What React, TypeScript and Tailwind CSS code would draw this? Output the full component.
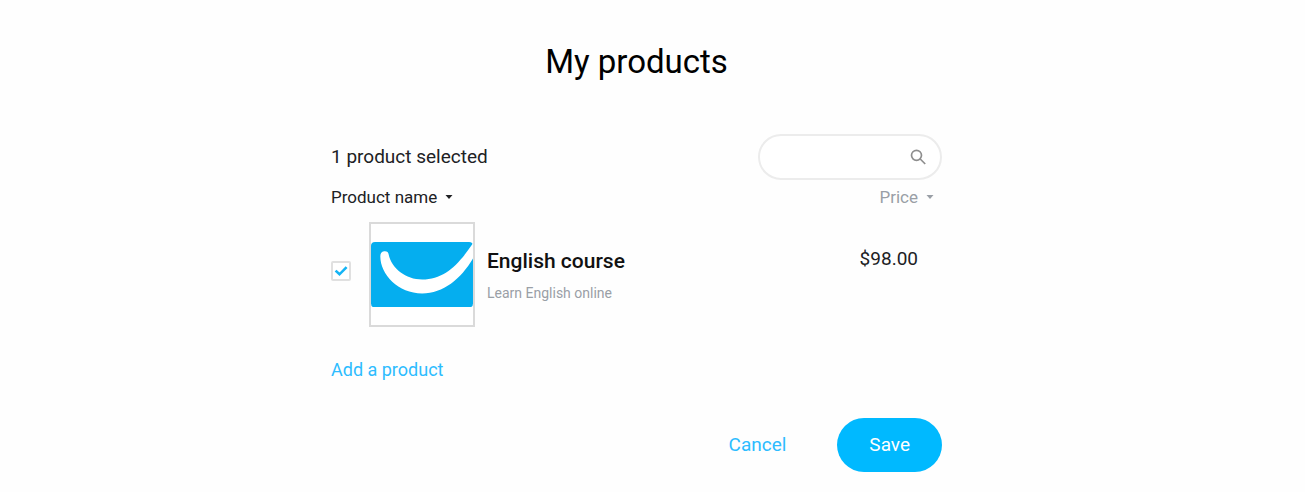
import { useState } from "react";

interface Product {
    id: number;
    name: string;
    description: string;
    price: string;
}

const products: Product[] = [
    { id: 1, name: "English course", description: "Learn English online", price: "$98.00" }
];

export default function App() {
    const [selected, setSelected] = useState<number[]>([1]);

    const toggle = (id: number) => {
        setSelected(selected.includes(id) ? selected.filter((s) => s !== id) : [...selected, id]);
    }

    return <main className="min-h-screen bg-[#fefefe] pt-10 pr-8 font-['Roboto',sans-serif] text-[#202124]">
        <div className="mx-auto w-full max-w-[611px]">
            <h1 className="text-center text-[33px] leading-11 text-black">My products</h1>
            <div className="mt-[50px] flex items-center justify-between">
                <div className="text-[19px]">{selected.length} product selected</div>
                <SearchBox />
            </div>
            <table className="mt-1 w-full text-left">
                <thead>
                    <tr>
                        <th colSpan={2} className="p-0 font-normal">
                            <SortButton label="Product name" />
                        </th>
                        <th className="p-0 pr-2 text-right font-normal text-[#9a9fa6]">
                            <SortButton label="Price" />
                        </th>
                    </tr>
                </thead>
                <tbody>
                    {products.map((product) => <ProductRow
                        key={product.id}
                        product={product}
                        checked={selected.includes(product.id)}
                        onToggle={() => toggle(product.id)}
                    />)}
                </tbody>
            </table>
            <a href="#add" className="mt-[29px] inline-block text-lg text-[#2dbcff]">Add a product</a>
            <div className="mt-[34px] flex items-center justify-end gap-[51px]">
                <button type="button" className="text-[19px] text-[#2dbcff]">Cancel</button>
                <button type="button" className="h-[54px] rounded-full bg-[#00b9ff] px-8 text-[19px] text-white">Save</button>
            </div>
        </div>
    </main>
}

function ProductRow({ product, checked, onToggle }: { product: Product, checked: boolean, onToggle: () => void }) {
    return <tr>
        <td className="w-[38px] p-0 pt-1">
            <label className="relative flex h-5 w-5">
                <input
                    type="checkbox"
                    aria-label={`Select ${product.name}`}
                    checked={checked}
                    onChange={onToggle}
                    className="peer h-5 w-5 appearance-none rounded-xs border-2 border-[#e0e0e0] bg-white"
                />
                <svg viewBox="0 0 20 20" className="pointer-events-none absolute inset-0 hidden peer-checked:block" fill="none" stroke="#14b4f5" strokeWidth="2.6">
                    <path d="M4.6 9.6 L8.5 13.3 L15.6 6.2" />
                </svg>
            </label>
        </td>
        <td className="p-0 pt-3">
            <div className="flex items-center">
                <div className="flex h-[105px] w-[106px] items-center border-2 border-[#dadada] bg-white">
                    <Smile />
                </div>
                <div className="ml-3">
                    <div className="text-[21px] leading-7 font-medium text-[#111111]">{product.name}</div>
                    <div className="mt-2 text-sm text-[#9a9fa6]">{product.description}</div>
                </div>
            </div>
        </td>
        <td className="p-0 pr-6 pt-[35px] text-right align-top text-[19px]">{product.price}</td>
    </tr>
}

function SearchBox() {
    return <label className="flex h-[46px] w-[184px] items-center rounded-full border-2 border-[#ececec] bg-white pr-3.5 pl-5">
        <input type="text" aria-label="Search products" className="min-w-0 flex-1 text-base outline-none" />
        <svg viewBox="0 0 16 16" className="h-4 w-4" fill="none" stroke="#8e8e8e" strokeWidth="1.7">
            <circle cx="6.5" cy="6.3" r="5" />
            <path d="M10.2 10 L15.2 15" />
        </svg>
    </label>
}

function SortButton({ label }: { label: string }) {
    return <button type="button" className="inline-flex items-center gap-2 text-[17px] leading-[26px]">
        {label}
        <svg viewBox="0 0 8 4" className="h-1 w-2" fill="currentColor">
            <path d="M0.5 0 H7.5 L4 4 Z" />
        </svg>
    </button>
}

function Smile() {
    return <svg viewBox="0 0 307 197" className="w-full">
        <rect width="307" height="197" rx="12" fill="#05aeef" />
        <path
            d="M28 44 C28 32 34 28 42 28 C49 28 52 31 53 37 C62 80 105 113 154 113 C220 113 262 70 307 4 V50 C270 112 218 155 154 155 C82 155 28 98 28 44 Z"
            fill="#ffffff"
        />
    </svg>
}
